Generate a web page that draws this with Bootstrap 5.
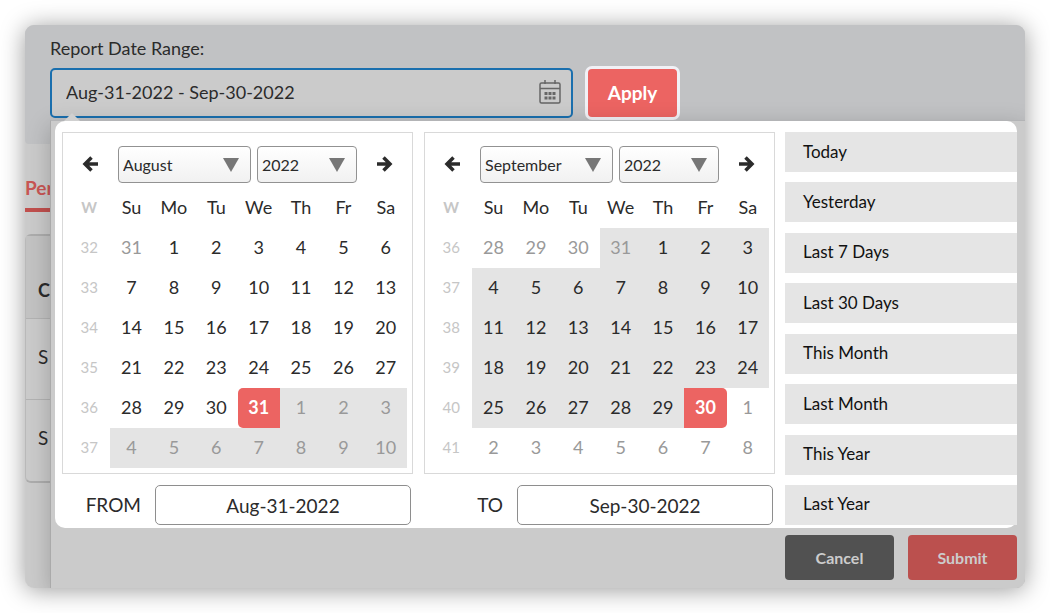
<!DOCTYPE html>
<html lang="en">
<head>
<meta charset="utf-8">
<meta name="viewport" content="width=device-width, initial-scale=1">
<title>Report Date Range</title>
<link href="https://cdn.jsdelivr.net/npm/bootstrap@5.3.0/dist/css/bootstrap.min.css" rel="stylesheet">
<style>
  body { font-family: Lato, "Liberation Sans", sans-serif; font-size: 19px; line-height: 24px; color: #2b2b2b; background: #fff; padding: 25px; }
  .shell { background: #cbcbcb; border-radius: 9px; box-shadow: 0 2px 24px rgba(0,0,0,.4); }
  .shell-inner { border-radius: 9px; overflow: hidden; }
  .topbar { background: #c1c2c4; padding: 11px 25px 0; }
  .topbar label { font-size: 18px; margin-bottom: 6px; }
  .range-row { gap: 12px; }
  .range-box { width: 523px; }
  .range-box .form-control { height: 50px; border: 2px solid #1a6fae; border-radius: 5px; background: #cbcbcb; color: #2b2b2b; font-size: 18px; padding: 0 48px 2px 14px; }
  .range-box svg { position: absolute; right: 11px; top: 11px; }
  .btn-apply { height: 54px; width: 95px; border: 3px solid #f1f1f6; border-radius: 7px; background: #ec6462; color: #fff; font-size: 19px; font-weight: 700; padding: 0; }
  .strip { width: 25px; white-space: nowrap; overflow: hidden; }
  .strip-top { height: 24px; background: #c1c2c4; border-radius: 0 0 0 4px; }
  .strip-tab { margin-top: 30px; height: 38px; border-bottom: 4px solid #c1504e; color: #c95654; font-weight: 700; font-size: 19px; line-height: 28px; }
  .strip-table { width: 200px; margin-top: 22px; border: 2px solid #adadad; border-left-color: #b9b9b9; border-left-width: 1px; border-radius: 6px; }
  .strip-table div { height: 81px; padding: 26px 12px 0; border-bottom: 1px solid #b3b3b3; }
  .strip-table div:first-child { height: 83px; padding-top: 42px; background: #c3c3c3; font-weight: 700; font-size: 18px; }
  .strip-table div:last-child { border-bottom: 0; }
  .dialog-pane { min-width: 0; border-left: 1px solid #aaa; border-top: 1px solid #b3b4b6; box-shadow: 0 6px 22px rgba(0,0,0,.22); background: #cbcbcb; padding: 0 8px 8px 4px; }
  .picker { background: #fff; border-radius: 10px; padding: 11px 0 3px 7px; gap: 10px; }
  .picker::before { content: ""; position: absolute; left: 9px; top: -8px; border: 8px solid transparent; border-top: 0; border-bottom-color: #d0d0d0; }
  .months { gap: 11px; flex: 1 1 0; min-width: 0; }
  .cal-col { flex: 1 1 0; min-width: 0; }
  .cal { border: 1px solid #d9d9d9; padding: 13px 5px 5px; }
  .cal-head { gap: 6px; margin-bottom: 5px; }
  .cal-head button { width: 44px; height: 37px; border: 0; background: none; padding: 0 0 2px; }
  .cal-head .form-select { height: 37px; width: 100px; border: 1px solid #929292; border-radius: 4px; font-size: 16px; padding: 0 28px 0 4px; color: #2b2b2b;
    background: url("data:image/svg+xml,%3Csvg xmlns='http://www.w3.org/2000/svg' width='16' height='14'%3E%3Cpath d='M0 0h16L8 14z' fill='%23777'/%3E%3C/svg%3E") no-repeat right 11px center / 16px 14px, linear-gradient(#fff, #f1f1f1); }
  .cal-head .form-select.month { flex: 1 1 0; min-width: 0; }
  .days { width: 100%; table-layout: fixed; text-align: center; font-size: 18px; line-height: 24px; }
  .days th, .days td { height: 40px; padding: 0 0 2px; font-weight: 400; }
  .days .wk { color: #c6c6c6; font-size: 15px; }
  .days thead .wk { font-weight: 700; }
  .days .off { color: #999; }
  .days .in { background: #e4e4e4; }
  .days .pick { background: #ec6462; color: #fff; font-weight: 700; }
  .days .first { border-radius: 5px 0 0 5px; }
  .days .last { border-radius: 0 5px 5px 0; }
  .bound { gap: 14px; margin: 11px 2px 0 0; }
  .bound .form-control { width: 256px; height: 40px; border: 1px solid #8e8e8e; border-radius: 5px; font-size: 19px; text-align: center; padding: 0; color: #2b2b2b; }
  .presets { width: 232px; flex: none; }
  .presets button { height: 40px; border: 0; background: #e5e5e5; color: #111; text-align: left; padding: 0 18px 1px; font-size: 17px; }
  .actions { gap: 14px; padding-top: 7px; }
  .actions .btn { width: 109px; height: 45px; border: 0; border-radius: 4px; font-size: 16px; font-weight: 700; color: #ccc; padding: 0; }
  .actions .btn-cancel { background: #515151; }
  .actions .btn-submit { background: #bb504e; }
</style>
</head>
<body>
<main class="shell">
 <div class="shell-inner">
  <header class="topbar">
    <label class="d-block" for="range">Report Date Range:</label>
    <div class="range-row d-flex align-items-center">
      <div class="range-box position-relative">
        <input id="range" class="form-control shadow-none" type="text" value="Aug-31-2022 - Sep-30-2022">
        <svg width="24" height="26" viewBox="0 0 24 26" fill="none" stroke="#666" stroke-width="1.5" aria-hidden="true">
          <rect x="2" y="4" width="20" height="20" rx="1.5"/><path d="M2 9.500h20M7 1v4M17 1v4"/>
          <path d="M6.500 14.500h11M6.500 19h11" stroke-width="3" stroke-dasharray="3 1"/>
        </svg>
      </div>
      <button class="btn btn-apply" type="button">Apply</button>
    </div>
  </header>
  <div class="d-flex">
    <div class="strip flex-shrink-0">
      <div class="strip-top"></div>
      <div class="strip-tab">Per</div>
      <div class="strip-table"><div>C</div><div>S</div><div>S</div></div>
    </div>
    <section class="dialog-pane flex-fill position-relative">
      <div class="picker position-relative d-flex">
        <div class="months d-flex">
          <div class="cal-col">
            <div class="cal" data-month="August"></div>
            <div class="bound d-flex align-items-center justify-content-end">
              <label for="from">FROM</label><input id="from" class="form-control" type="text" value="Aug-31-2022">
            </div>
          </div>
          <div class="cal-col">
            <div class="cal" data-month="September"></div>
            <div class="bound d-flex align-items-center justify-content-end">
              <label for="to">TO</label><input id="to" class="form-control" type="text" value="Sep-30-2022">
            </div>
          </div>
        </div>
        <div class="presets d-flex flex-column justify-content-between">
          <button type="button">Today</button><button type="button">Yesterday</button>
          <button type="button">Last 7 Days</button><button type="button">Last 30 Days</button>
          <button type="button">This Month</button><button type="button">Last Month</button>
          <button type="button">This Year</button><button type="button">Last Year</button>
        </div>
      </div>
      <div class="actions d-flex justify-content-end">
        <button class="btn btn-cancel" type="button">Cancel</button>
        <button class="btn btn-submit" type="button">Submit</button>
      </div>
    </section>
  </div>
 </div>
</main>
<script src="https://cdn.jsdelivr.net/npm/bootstrap@5.3.0/dist/js/bootstrap.bundle.min.js"></script>
<script>
  // Six-week grids; the selected range runs from Aug 31 to Sep 30, 2022.
  const months = {
    August: { index: 7, start: new Date(2022, 6, 31), week: 32 },
    September: { index: 8, start: new Date(2022, 7, 28), week: 36 }
  };
  const from = +new Date(2022, 7, 31), to = +new Date(2022, 8, 30);
  const arrow = d => `<svg class="d-block mx-auto" width="16" height="16" viewBox="0 0 16 16" fill="none" stroke="#2b2b2b" stroke-width="3.5" aria-hidden="true"><path d="${d}"/></svg>`;
  document.querySelectorAll('.cal').forEach(cal => {
    const name = cal.dataset.month, m = months[name];
    let rows = '';
    for (let r = 0; r < 6; r++) {
      rows += `<tr><th scope="row" class="wk">${m.week + r}</th>`;
      for (let c = 0; c < 7; c++) {
        const d = new Date(m.start); d.setDate(d.getDate() + r * 7 + c);
        const own = d.getMonth() === m.index, cls = [];
        if (+d === from && own) cls.push('pick', 'first');
        else if (+d === to && own) cls.push('pick', 'last');
        else if (+d >= from && +d <= to) cls.push('in');
        if (!own) cls.push('off');
        rows += `<td class="${cls.join(' ')}">${d.getDate()}</td>`;
      }
      rows += '</tr>';
    }
    cal.innerHTML = `<div class="cal-head d-flex align-items-center">
      <button type="button" aria-label="Previous month">${arrow('M16 8H3M9.500 1.500L3 8L9.500 14.500')}</button>
      <select class="form-select month" aria-label="Month"><option>${name}</option></select>
      <select class="form-select" aria-label="Year"><option>2022</option></select>
      <button type="button" aria-label="Next month">${arrow('M0 8H13M6.500 1.500L13 8L6.500 14.500')}</button></div>
      <table class="days"><thead><tr><th class="wk">W</th>${['Su','Mo','Tu','We','Th','Fr','Sa'].map(x => `<th scope="col">${x}</th>`).join('')}</tr></thead><tbody>${rows}</tbody></table>`;
  });
</script>
</body>
</html>
